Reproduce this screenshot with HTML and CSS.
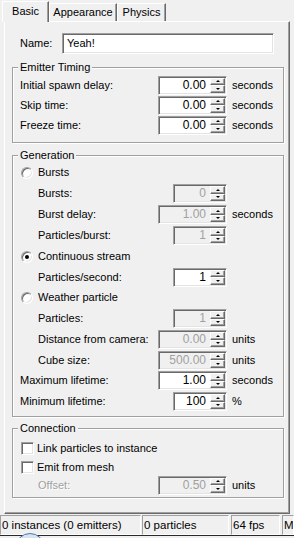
FILE: index.html
```html
<!DOCTYPE html>
<html>
<head>
<meta charset="utf-8">
<link rel="stylesheet" href="styles.css">
</head>
<body>
<div class="tabs">
  <div class="tab tab-basic active">Basic</div>
  <div class="tab tab-appearance">Appearance</div>
  <div class="tab tab-physics">Physics</div>
</div>
<div class="panel">
  <div class="name-row">
    <span class="name-lbl">Name:</span>
    <div class="field">Yeah!</div>
  </div>

  <fieldset class="group group-emit">
    <legend>Emitter Timing</legend>
    <div class="row h20">
      <span class="lbl">Initial spawn delay:</span>
      <div class="spin-col"><div class="spin wide"><span class="val">0.00</span><span class="btns"><i class="btn up"></i><i class="btn dn"></i></span></div></div>
      <span class="unit">seconds</span>
    </div>
    <div class="row h20">
      <span class="lbl">Skip time:</span>
      <div class="spin-col"><div class="spin wide"><span class="val">0.00</span><span class="btns"><i class="btn up"></i><i class="btn dn"></i></span></div></div>
      <span class="unit">seconds</span>
    </div>
    <div class="row h20">
      <span class="lbl">Freeze time:</span>
      <div class="spin-col"><div class="spin wide"><span class="val">0.00</span><span class="btns"><i class="btn up"></i><i class="btn dn"></i></span></div></div>
      <span class="unit">seconds</span>
    </div>
  </fieldset>

  <fieldset class="group group-gen">
    <legend>Generation</legend>
    <div class="row opt">
      <span class="radio"></span><span>Bursts</span>
    </div>
    <div class="row">
      <span class="lbl sub">Bursts:</span>
      <div class="spin-col"><div class="spin narrow dis"><span class="val">0</span><span class="btns"><i class="btn up"></i><i class="btn dn"></i></span></div></div>
    </div>
    <div class="row">
      <span class="lbl sub">Burst delay:</span>
      <div class="spin-col"><div class="spin wide dis"><span class="val">1.00</span><span class="btns"><i class="btn up"></i><i class="btn dn"></i></span></div></div>
      <span class="unit">seconds</span>
    </div>
    <div class="row">
      <span class="lbl sub">Particles/burst:</span>
      <div class="spin-col"><div class="spin narrow dis"><span class="val">1</span><span class="btns"><i class="btn up"></i><i class="btn dn"></i></span></div></div>
    </div>
    <div class="row opt">
      <span class="radio checked"></span><span>Continuous stream</span>
    </div>
    <div class="row h20">
      <span class="lbl sub">Particles/second:</span>
      <div class="spin-col"><div class="spin narrow"><span class="val">1</span><span class="btns"><i class="btn up"></i><i class="btn dn"></i></span></div></div>
    </div>
    <div class="row opt">
      <span class="radio"></span><span>Weather particle</span>
    </div>
    <div class="row">
      <span class="lbl sub">Particles:</span>
      <div class="spin-col"><div class="spin narrow dis"><span class="val">1</span><span class="btns"><i class="btn up"></i><i class="btn dn"></i></span></div></div>
    </div>
    <div class="row">
      <span class="lbl sub">Distance from camera:</span>
      <div class="spin-col"><div class="spin wide dis"><span class="val">0.00</span><span class="btns"><i class="btn up"></i><i class="btn dn"></i></span></div></div>
      <span class="unit">units</span>
    </div>
    <div class="row h20">
      <span class="lbl sub">Cube size:</span>
      <div class="spin-col"><div class="spin wide dis"><span class="val">500.00</span><span class="btns"><i class="btn up"></i><i class="btn dn"></i></span></div></div>
      <span class="unit">units</span>
    </div>
    <div class="row">
      <span class="lbl">Maximum lifetime:</span>
      <div class="spin-col"><div class="spin wide"><span class="val">1.00</span><span class="btns"><i class="btn up"></i><i class="btn dn"></i></span></div></div>
      <span class="unit">seconds</span>
    </div>
    <div class="row">
      <span class="lbl">Minimum lifetime:</span>
      <div class="spin-col"><div class="spin narrow"><span class="val">100</span><span class="btns"><i class="btn up"></i><i class="btn dn"></i></span></div></div>
      <span class="unit">%</span>
    </div>
  </fieldset>

  <fieldset class="group group-conn">
    <legend>Connection</legend>
    <div class="row h20 chk-row">
      <span class="check"></span><span>Link particles to instance</span>
    </div>
    <div class="row h18 chk-row">
      <span class="check"></span><span>Emit from mesh</span>
    </div>
    <div class="row h18">
      <span class="lbl sub disabled">Offset:</span>
      <div class="spin-col"><div class="spin wide dis"><span class="val">0.50</span><span class="btns"><i class="btn up"></i><i class="btn dn"></i></span></div></div>
      <span class="unit">units</span>
    </div>
  </fieldset>
</div>
<div class="status">
  <div class="cell c1">0 instances (0 emitters)</div>
  <div class="cell c2">0 particles</div>
  <div class="cell c3">64 fps</div>
  <div class="cell c4">M</div>
</div>
<div class="bottom-line"></div>
<div class="orb"></div>
</body>
</html>
```

FILE: styles.css
```css
* { box-sizing: border-box; }

body {
  margin: 0;
  width: 294px;
  height: 538px;
  overflow: hidden;
  position: relative;
  background: #f0f0f0;
  color: #000;
  font: 11px/13px "Liberation Sans", Arial, sans-serif;
}

/* tabs */
.tabs {
  display: flex;
  align-items: flex-end;
  height: 21px;
  padding-left: 2px;
}
.tab {
  height: 18px;
  line-height: 17px;
  text-align: center;
  border: 1px solid #fff;
  border-bottom: 0;
  border-right-color: #696969;
  box-shadow: inset -1px 0 0 #a0a0a0;
  white-space: nowrap;
}
.tab-basic { width: 47px; }
.tab-appearance { width: 68px; }
.tab-physics { width: 49px; }
.tab.active {
  height: 21px;
  line-height: 19px;
  margin-bottom: -1px;
  position: relative;
  z-index: 1;
  background: #f0f0f0;
}

/* main page */
.panel {
  margin-left: 4px;
  width: 286px;
  border-top: 1px solid #fff;
  border-left: 1px solid #fff;
  border-right: 1px solid #696969;
  border-bottom: 1px solid #696969;
  box-shadow: inset -1px -1px 0 #a0a0a0;
  padding: 11px 5px 15px 7px;
}

.name-row {
  display: flex;
  align-items: center;
  height: 21px;
  padding-left: 8px;
}
.name-lbl { width: 42px; }
.field {
  width: 212px;
  height: 21px;
  background: #fff;
  border: 1px solid;
  border-color: #a0a0a0 #fff #fff #a0a0a0;
  box-shadow: inset 1px 1px 0 #696969, inset -1px -1px 0 #e3e3e3;
  padding-left: 4px;
  line-height: 19px;
}

/* group boxes */
.group {
  margin: 7px 0 0;
  padding: 0;
  min-width: 0;
  border: 1px solid #a0a0a0;
  box-shadow: inset 1px 1px 0 #fff, 1px 1px 0 #fff;
}
.group legend {
  margin-left: 5px;
  padding: 0 2px;
  line-height: 13px;
  background: #f0f0f0;
}
.group-emit { padding: 1px 0 7px; }
.group-gen { margin-top: 6px; padding: 0 0 4px; }
.group-conn { margin-top: 5px; padding: 3px 0 3px; }

/* rows */
.row {
  display: flex;
  align-items: center;
  height: 21px;
  white-space: nowrap;
}
.row.h20 { height: 20px; }
.row.h18 { height: 18px; }

.lbl { width: 145px; padding-left: 7px; }
.lbl.sub { padding-left: 25px; }
.disabled { color: #a0a0a0; text-shadow: 1px 1px 0 #fff; }

.spin-col {
  width: 69px;
  display: flex;
  justify-content: flex-end;
}
.unit { margin-left: 5px; }

/* spin edit */
.spin {
  display: flex;
  height: 19px;
  padding: 1px;
  background: #fff;
  border: 1px solid;
  border-color: #a0a0a0 #fff #fff #a0a0a0;
  box-shadow: inset 1px 1px 0 #696969, inset -1px -1px 0 #e3e3e3;
}
.spin.wide { width: 69px; }
.spin.narrow { width: 54px; }
.spin.dis { background: #f0f0f0; }
.val {
  flex: 1;
  text-align: right;
  padding-right: 4px;
  font-size: 12px;
  line-height: 15px;
}
.spin.dis .val { color: #a0a0a0; }
.btns {
  width: 15px;
  display: flex;
  flex-direction: column;
}
.btn {
  flex: 1;
  display: flex;
  align-items: center;
  justify-content: center;
  background: #f0f0f0;
  border: 1px solid;
  border-color: #fff #696969 #696969 #fff;
  box-shadow: inset -1px -1px 0 #a0a0a0;
}
.btn::before {
  content: "";
  border-left: 2px solid transparent;
  border-right: 2px solid transparent;
}
.up::before { border-bottom: 2px solid #000; }
.dn::before { border-top: 2px solid #000; }

/* radios and checkboxes */
.opt { padding-left: 8px; }
.radio {
  width: 12px;
  height: 12px;
  margin-right: 5px;
  border-radius: 50%;
  background: #fff;
  border: 1px solid;
  border-color: #a0a0a0 #fff #fff #a0a0a0;
  box-shadow: inset 1px 1px 0 #696969, inset -1px -1px 0 #e3e3e3;
  display: flex;
  align-items: center;
  justify-content: center;
}
.radio.checked::before {
  content: "";
  width: 4px;
  height: 4px;
  border-radius: 50%;
  background: #000;
}
.chk-row { padding-left: 8px; }
.check {
  width: 13px;
  height: 13px;
  margin-right: 3px;
  background: #fff;
  border: 1px solid;
  border-color: #a0a0a0 #fff #fff #a0a0a0;
  box-shadow: inset 1px 1px 0 #696969, inset -1px -1px 0 #e3e3e3;
}

/* status bar */
.status {
  display: flex;
  height: 20px;
  margin-top: 1px;
}
.cell {
  border: 1px solid;
  border-color: #a0a0a0 #fff #fff #a0a0a0;
  padding-left: 1px;
  line-height: 18px;
  font-size: 11.5px;
  white-space: nowrap;
  overflow: hidden;
}
.c1 { width: 141px; }
.c2 { width: 87px; margin-left: 1px; }
.c3 { width: 49px; margin-left: 2px; }
.c4 { flex: 1; margin-left: 2px; }

.bottom-line {
  height: 1px;
  background: #2a2a2a;
}

.orb {
  position: absolute;
  left: 15px;
  top: 533px;
  width: 30px;
  height: 30px;
  border-radius: 50%;
  background: #d6e4f2;
  border: 1px solid #4f78a6;
}
```
